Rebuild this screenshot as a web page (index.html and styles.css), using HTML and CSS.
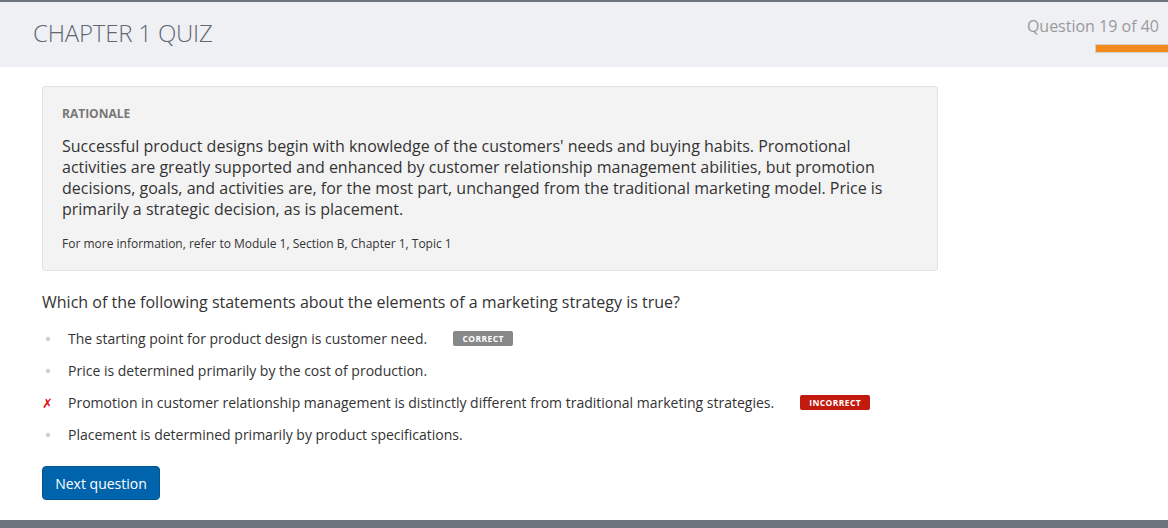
FILE: index.html
```html
<!DOCTYPE html>
<html lang="en">
<head>
<meta charset="utf-8">
<title>Chapter 1 Quiz</title>
<link rel="stylesheet" href="styles.css">
</head>
<body>
<div class="page">
  <header class="header">
    <h1 class="title">CHAPTER 1 QUIZ</h1>
    <div class="progress">
      <div class="progress-label">Question 19 of 40</div>
      <div class="progress-bar"></div>
    </div>
  </header>
  <main class="main">
    <section class="rationale">
      <div class="rationale-head">RATIONALE</div>
      <p class="rationale-body">Successful product designs begin with knowledge of the customers' needs and buying habits. Promotional activities are greatly supported and enhanced by customer relationship management abilities, but promotion decisions, goals, and activities are, for the most part, unchanged from the traditional marketing model. Price is primarily a strategic decision, as is placement.</p>
      <p class="rationale-ref">For more information, refer to Module 1, Section B, Chapter 1, Topic 1</p>
    </section>
    <p class="question">Which of the following statements about the elements of a marketing strategy is true?</p>
    <ul class="options">
      <li class="option"><span class="mark"><span class="diamond"></span></span><span class="opt-text">The starting point for product design is customer need.</span><span class="badge badge-correct">CORRECT</span></li>
      <li class="option"><span class="mark"><span class="diamond"></span></span><span class="opt-text">Price is determined primarily by the cost of production.</span></li>
      <li class="option"><span class="mark"><span class="cross">✗</span></span><span class="opt-text">Promotion in customer relationship management is distinctly different from traditional marketing strategies.</span><span class="badge badge-incorrect">INCORRECT</span></li>
      <li class="option"><span class="mark"><span class="diamond"></span></span><span class="opt-text">Placement is determined primarily by product specifications.</span></li>
    </ul>
    <button class="next-btn" type="button">Next question</button>
  </main>
  <footer class="footer"></footer>
</div>
</body>
</html>
```

FILE: styles.css
```css
* { box-sizing: border-box; }
html, body { margin: 0; padding: 0; }
body {
  font-family: "Open Sans", "Liberation Sans", sans-serif;
  color: #333;
  background: #fff;
  width: 1168px;
  height: 528px;
  overflow: hidden;
}
.page {
  display: flex;
  flex-direction: column;
  height: 528px;
}
.header {
  border-top: 2px solid #6b747c;
  background: #eff0f4;
  height: 67px;
  display: flex;
  justify-content: space-between;
  align-items: flex-start;
  flex-shrink: 0;
}
.title {
  margin: 16px 0 0 33px;
  font-weight: 300;
  font-size: 24px;
  line-height: 30px;
  color: #5f6771;
  letter-spacing: -0.2px;
}
.progress {
  display: flex;
  flex-direction: column;
  align-items: flex-end;
  padding-top: 14px;
}
.progress-label {
  font-size: 16px;
  line-height: 20px;
  color: #9a9a9a;
  margin-right: 9px;
}
.progress-bar {
  margin-top: 8px;
  width: 73px;
  height: 9px;
  background: #f28b1e;
  border: 1px solid #d8d0c4;
  border-right: none;
}
.main {
  flex: 1;
  padding: 19px 0 0 42px;
}
.rationale {
  width: 896px;
  height: 185px;
  background: #f3f3f3;
  border: 1px solid #e2e2e2;
  border-radius: 3px;
  padding: 19px 20px 0 19px;
}
.rationale-head {
  font-size: 12px;
  font-weight: 700;
  color: #777;
  line-height: 16px;
}
.rationale-body {
  margin: 14px 0 0;
  font-size: 16px;
  line-height: 21px;
  color: #333;
  padding-right: 30px;
}
.rationale-ref {
  margin: 16px 0 0;
  font-size: 12px;
  line-height: 16px;
  color: #333;
}
.question {
  margin: 20px 0 0;
  font-size: 16px;
  line-height: 22px;
  color: #333;
}
.options {
  list-style: none;
  margin: 10px 0 0;
  padding: 0;
}
.option {
  display: flex;
  align-items: center;
  height: 32px;
  font-size: 14px;
  color: #333;
}
.mark {
  width: 26px;
  display: flex;
  align-items: center;
  padding-left: 3px;
}
.diamond {
  width: 4px;
  height: 4px;
  background: #cfcfcf;
  transform: rotate(45deg);
  margin-left: 1px;
}
.cross {
  color: #e01010;
  font-size: 13px;
  font-weight: 700;
  font-family: "DejaVu Sans", sans-serif;
  margin-left: -3px;
}
.opt-text { line-height: 20px; }
.badge {
  margin-left: 26px;
  font-size: 8.5px;
  font-weight: 700;
  letter-spacing: 0.4px;
  color: #fff;
  border-radius: 2px;
  height: 15px;
  line-height: 15px;
  text-align: center;
  position: relative;
  top: -1px;
}
.badge-correct {
  background: #888;
  width: 60px;
}
.badge-incorrect {
  background: #c21a0e;
  width: 70px;
}
.next-btn {
  margin-top: 15px;
  width: 118px;
  height: 34px;
  background: #0064ad;
  border: 1px solid #04548f;
  border-radius: 4px;
  color: #fff;
  font-family: "Open Sans", "Liberation Sans", sans-serif;
  font-size: 14px;
  padding: 0;
}
.footer {
  height: 8px;
  background: #6b747c;
  flex-shrink: 0;
}
```
